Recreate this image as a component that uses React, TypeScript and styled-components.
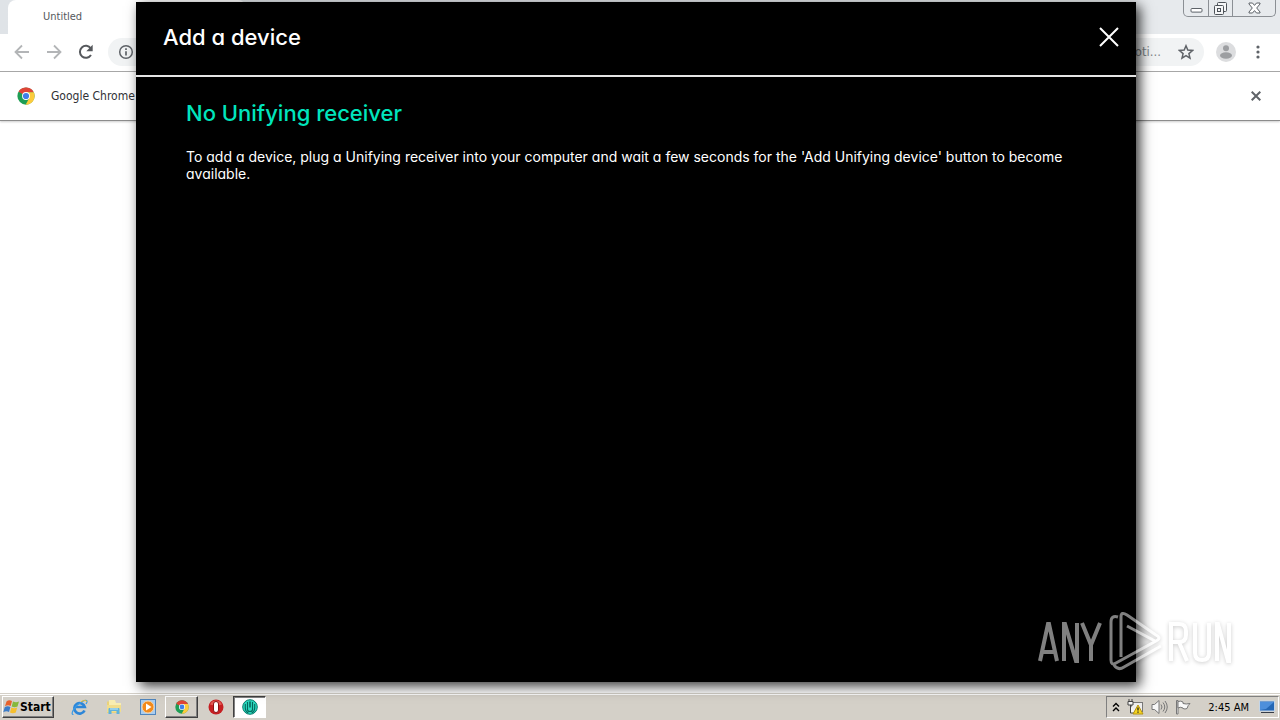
import React from 'react';
import styled, { createGlobalStyle } from 'styled-components';

const GlobalStyle = createGlobalStyle`
  * { box-sizing: border-box; }
  body { margin: 0; background: #fff; }
  button { font: inherit; color: inherit; background: none; border: 0; padding: 0; cursor: pointer; }
  svg { display: block; flex: none; }
`;

const uiFont = '"DejaVu Sans Condensed", "DejaVu Sans", sans-serif';

const Desktop = styled.div`
  position: relative;
  display: flex;
  flex-direction: column;
  min-height: 100vh;
  overflow: hidden;
  font-family: ${uiFont};
`;

const Browser = styled.section`
  flex: 1;
  display: flex;
  flex-direction: column;
  background: #fff;
`;

const TabStrip = styled.div`
  display: flex;
  justify-content: space-between;
  height: 34px;
  padding-left: 8px;
  background: linear-gradient(to right, #dfe3e7, #e7eaed 80%);
`;

const Tab = styled.div`
  width: 238px;
  padding: 10px 35px 0;
  border-radius: 8px 8px 0 0;
  background: #fff;
  color: #55585c;
  font-size: 11px;
  line-height: 14px;
`;

const WindowControls = styled.div`
  display: flex;
  height: 17px;
  margin-right: 4px;
  border: 1px solid #8b8f94;
  border-top: 0;
  border-radius: 0 0 5px 5px;
  overflow: hidden;
`;

const WindowButton = styled.button<{ $wide?: boolean }>`
  display: grid;
  place-items: center;
  width: ${(p) => (p.$wide ? 43 : 24)}px;
  & + & { border-left: 1px solid #8b8f94; }
`;

const Toolbar = styled.div`
  display: flex;
  align-items: center;
  gap: 12px;
  height: 38px;
  padding: 0 12px 2px;
  border-bottom: 1px solid #a9a9a9;
`;

const IconButton = styled.button`
  display: grid;
  place-items: center;
  width: 20px;
  height: 20px;
`;

const AddressBar = styled.div`
  flex: 1;
  display: flex;
  align-items: center;
  gap: 15px;
  height: 28px;
  padding: 0 8px 0 10px;
  border-radius: 14px;
  background: #f1f3f4;
  color: #80868b;
  font-size: 13px;
`;

const AddressText = styled.span`
  flex: 1;
  text-align: right;
`;

const InfoBar = styled.div`
  display: flex;
  align-items: center;
  gap: 16px;
  height: 49px;
  padding: 0 14px 0 17px;
  border-bottom: 1px solid #8c8c8c;
  box-shadow: 0 1px 2px rgba(0, 0, 0, 0.2);
  color: #303236;
  font-size: 12px;
`;

const InfoText = styled.span`
  flex: 1;
`;

const Dialog = styled.section`
  position: absolute;
  top: 2px;
  right: 144px;
  bottom: 38px;
  left: 136px;
  background: #000;
  color: #fff;
  box-shadow: 4px 4px 12px rgba(0, 0, 0, 0.8);
  font-family: Inter, sans-serif;
  font-feature-settings: "cv11" 1;
`;

const DialogHeader = styled.header`
  display: flex;
  align-items: center;
  justify-content: space-between;
  height: 75px;
  padding: 0 17px 4px 27px;
  border-bottom: 2px solid #e4e4e4;
`;

const DialogTitle = styled.h1`
  margin: 0;
  font-size: 22px;
  line-height: 28px;
  font-weight: 500;
`;

const DialogBody = styled.div`
  padding: 22px 50px;
`;

const Heading = styled.h2`
  margin: 0 0 21px;
  color: #00e5bd;
  font-size: 22px;
  line-height: 28px;
  font-weight: 500;
`;

const Message = styled.p`
  margin: 0;
  font-size: 14px;
  line-height: 17px;
  font-weight: 400;
`;

const Watermark = styled.div`
  position: absolute;
  right: 48px;
  bottom: 47px;
  opacity: 0.5;
  filter: drop-shadow(0 1px 2px rgba(0, 0, 0, 0.4));
`;

const Taskbar = styled.footer`
  display: flex;
  align-items: center;
  justify-content: space-between;
  height: 27px;
  padding: 1px 1px 1px 2px;
  background: #d4d0c8;
  border-top: 1px solid #d4d0c8;
  box-shadow: inset 0 1px 0 #fff;
`;

const TaskGroup = styled.div`
  display: flex;
  align-items: center;
  gap: 1px;
`;

const StartButton = styled.button`
  display: flex;
  align-items: center;
  width: 52px;
  height: 22px;
  margin-right: 8px;
  border: 1px solid;
  border-color: #fff #404040 #404040 #fff;
  box-shadow: inset -1px -1px 0 #808080;
  color: #000;
  font-size: 12px;
  font-weight: 700;
`;

const TaskButton = styled.button<{ $state?: 'open' | 'active' }>`
  display: grid;
  place-items: center;
  width: 33px;
  height: 22px;
  border: 1px solid transparent;
  ${(p) => p.$state === 'open' && `
    border-color: #fff #404040 #404040 #fff;
    box-shadow: inset -1px -1px 0 #808080;
  `}
  ${(p) => p.$state === 'active' && `
    border-color: #404040 #fff #fff #404040;
    box-shadow: inset 1px 1px 0 #808080;
    background: #fff;
  `}
`;

const Tray = styled.div`
  display: flex;
  align-items: center;
  gap: 7px;
  height: 22px;
  padding: 0 3px 0 5px;
  border: 1px solid;
  border-color: #808080 #fff #fff #808080;
  color: #000;
  font-size: 11px;
`;

const Clock = styled.time`
  margin: 0 3px 0 9px;
`;

const ChromeLogo = ({ size = 18 }: { size?: number }) => (
  <svg width={size} height={size} viewBox="0 0 48 48">
    <circle cx="24" cy="24" r="23" fill="#1e9e54" />
    <path d="M24 24 4.1 12.5A23 23 0 0 1 43.9 12.5L44 14H24Z" fill="#df4436" />
    <path d="M24 14H44.8A23 23 0 0 1 23 47L32.7 29Z" fill="#fccb3c" />
    <circle cx="24" cy="24" r="10.5" fill="#fff" />
    <circle cx="24" cy="24" r="8.2" fill="#3f7fe8" />
  </svg>
);

const BackArrow = ({ flip = false }: { flip?: boolean }) => (
  <svg width="16" height="16" viewBox="0 0 16 16" fill="none" stroke="#b3b5b7" strokeWidth="1.8">
    <path d={flip ? 'M1 8h13M8 1.5 14.5 8 8 14.5' : 'M15 8H2M8 1.5 1.5 8 8 14.5'} />
  </svg>
);

export default function App() {
  return (
    <Desktop>
      <GlobalStyle />
      <Browser>
        <TabStrip>
          <Tab>Untitled</Tab>
          <WindowControls>
            <WindowButton aria-label="Minimize">
              <svg width="13" height="17" viewBox="0 0 13 17" fill="#fff" stroke="#5d6268">
                <rect x="1" y="8.5" width="11" height="3.6" rx="1" />
              </svg>
            </WindowButton>
            <WindowButton aria-label="Restore">
              <svg width="13" height="13" viewBox="0 0 13 13" fill="#f5f6f7" stroke="#4d5258">
                <rect x="3.5" y=".5" width="9" height="9" rx="1" />
                <rect x=".5" y="3.5" width="9" height="9" rx="1" />
                <rect x="3.5" y="6.5" width="3" height="3" />
              </svg>
            </WindowButton>
            <WindowButton aria-label="Close window" $wide>
              <svg width="13" height="12" viewBox="0 0 13 12" fill="#fff" stroke="#5d6268">
                <path d="M1 1h3.5l2 2.4L8.5 1H12v1L8.7 6l3.3 4v1H8.5l-2-2.4L4.5 11H1v-1l3.3-4L1 2Z" />
              </svg>
            </WindowButton>
          </WindowControls>
        </TabStrip>
        <Toolbar>
          <IconButton aria-label="Back"><BackArrow /></IconButton>
          <IconButton aria-label="Forward"><BackArrow flip /></IconButton>
          <IconButton aria-label="Reload">
            <svg width="16" height="16" viewBox="0 0 16 16">
              <path d="M13 11A6 6 0 1 1 12.8 4.3" fill="none" stroke="#55585c" strokeWidth="2" />
              <path d="M14.7.8v6.400H8.300Z" fill="#55585c" />
            </svg>
          </IconButton>
          <AddressBar>
            <svg width="16" height="16" viewBox="0 0 16 16" fill="none" stroke="#5f6368" strokeWidth="1.5">
              <circle cx="8" cy="8" r="6.3" />
              <path d="M8 7.2v4.300M8 4.300v1.700" strokeWidth="1.7" />
            </svg>
            <AddressText>oti...</AddressText>
            <IconButton aria-label="Bookmark this page">
              <svg width="16" height="16" viewBox="0 0 16 16" fill="none" stroke="#5f6368" strokeWidth="1.5">
                <path d="m8 1.8 1.800 4.300 4.700.4-3.600 3.100 1.100 4.600L8 11.700l-4 2.500 1.100-4.600L1.500 6.500l4.700-.4Z" />
              </svg>
            </IconButton>
          </AddressBar>
          <IconButton aria-label="Profile">
            <svg width="20" height="20" viewBox="0 0 20 20">
              <circle cx="10" cy="10" r="10" fill="#dcdddf" />
              <circle cx="10" cy="6.3" r="3" fill="#9c9ea1" />
              <ellipse cx="10" cy="13.5" rx="6" ry="3.3" fill="#9c9ea1" />
            </svg>
          </IconButton>
          <IconButton aria-label="Menu">
            <svg width="4" height="14" viewBox="0 0 4 14" fill="#5f6368">
              <circle cx="2" cy="2" r="1.6" /><circle cx="2" cy="7" r="1.6" /><circle cx="2" cy="12" r="1.6" />
            </svg>
          </IconButton>
        </Toolbar>
        <InfoBar>
          <ChromeLogo />
          <InfoText>Google Chrome</InfoText>
          <IconButton aria-label="Dismiss">
            <svg width="10" height="10" viewBox="0 0 10 10" stroke="#5f6368" strokeWidth="2">
              <path d="m.7.7 8.6 8.6M9.3.7.7 9.3" />
            </svg>
          </IconButton>
        </InfoBar>
      </Browser>

      <Taskbar>
        <TaskGroup>
          <StartButton>
            <svg width="17" height="16" viewBox="0 0 17 16">
              <path d="M3.5 2.5Q6 .5 9 2L7.7 7Q5 5.5 2 7.2Z" fill="#e8622c" />
              <path d="M10 2.5q3 1.5 6 0L14.5 7.5q-3 1.5-5.8 0Z" fill="#86b83b" />
              <path d="M1.7 8.2Q4.5 6.5 7.4 8L6 13Q3.5 11.5.3 13.2Z" fill="#3c7cc8" />
              <path d="M8.4 8.5q3 1.5 5.8 0L12.8 13.5q-3 1.5-5.8 0Z" fill="#f6bf2e" />
            </svg>
            Start
          </StartButton>
          <TaskButton aria-label="Internet Explorer">
            <svg width="17" height="17" viewBox="0 0 17 17" fill="none">
              <path d="M13.5 11.5A5.3 5.3 0 1 1 13.8 8H4.5" stroke="#2c86d8" strokeWidth="2.7" />
              <path d="M2.5 15.5C-1.5 15.5 4 6.5 10.5 3 16-.5 17 2 15 5" stroke="#3a9ae6" strokeWidth="1.2" />
              <path d="M10 2.7Q15.5-.3 15.5 3" stroke="#e7bd35" />
            </svg>
          </TaskButton>
          <TaskButton aria-label="Windows Explorer">
            <svg width="16" height="16" viewBox="0 0 16 16">
              <path d="M1 2.5h5l1.5 1.5H14v10H1Z" fill="#ead27a" />
              <path d="M3 1h6l1 3h5v4H3Z" fill="#f8edb0" />
              <path d="M1 6h14v7H1Z" fill="#f1dd8c" />
              <path d="M2.5 15V10q0-1 1-1h9q1 0 1 1v5h-3v-3h-5v3Z" fill="#5fb2dc" />
              <path d="M4 10h8" stroke="#c8ecf8" />
            </svg>
          </TaskButton>
          <TaskButton aria-label="Media Player">
            <svg width="16" height="16" viewBox="0 0 16 16">
              <rect x=".5" y=".5" width="15" height="15" fill="#a9cdf0" stroke="#4f85bd" />
              <circle cx="8" cy="8" r="6" fill="#f28a1c" stroke="#fad2a1" />
              <path d="m6 4.5 5.5 3.5L6 11.5Z" fill="#fff" />
            </svg>
          </TaskButton>
          <TaskButton aria-label="Google Chrome" $state="open"><ChromeLogo size={14} /></TaskButton>
          <TaskButton aria-label="Opera">
            <svg width="16" height="16" viewBox="0 0 16 16">
              <circle cx="8" cy="8" r="7.5" fill="#c61f22" />
              <path d="M2 5.5a6.5 6.5 0 0 1 12 0Q8 7.5 2 5.5Z" fill="#e55a55" />
              <rect x="5.5" y="2.5" width="5" height="11" rx="2.5" fill="#fff" stroke="#8e1014" />
            </svg>
          </TaskButton>
          <TaskButton aria-label="Logitech Unifying" $state="active">
            <svg width="16" height="16" viewBox="0 0 16 16" fill="none">
              <circle cx="8" cy="8" r="7.3" fill="#2ad8be" stroke="#087c6c" />
              <path d="M8 2.5v6" stroke="#04584d" strokeWidth="1.4" />
              <path d="M5.5 3v7.5q0 2 2.5 2t2.500-2V3M3.300 5v4q0 3.500 3 5M12.700 5v4q0 3.500-3 5" stroke="#04695c" strokeWidth="1.1" />
            </svg>
          </TaskButton>
        </TaskGroup>
        <Tray>
          <svg width="8" height="10" viewBox="0 0 8 10" fill="none" stroke="#000" strokeWidth="1.4">
            <path d="m1 4.5 3-3 3 3M1 9l3-3 3 3" />
          </svg>
          <svg width="17" height="16" viewBox="0 0 17 16">
            <rect x="4.5" y="3.5" width="11" height="9" fill="#eee" stroke="#777" />
            <path d="M1 2.5h5V6H1ZM2 0v2.500M5 0v2.500M3.500 6v8H8" fill="#f6f6f6" stroke="#444" />
            <path d="m11 6 5 9H6Z" fill="#f6d51f" stroke="#b69312" />
            <path d="M11 8.5v3M11 12.5v1.300" stroke="#222" strokeWidth="1.3" />
          </svg>
          <svg width="17" height="16" viewBox="0 0 17 16" fill="none" stroke="#777">
            <path d="M1 5.5h2.500L8 1.500v13l-4.500-4H1Z" fill="#f7f7f7" />
            <path d="M10 5.5q2 2.500 0 5M12 3.500q3.500 4.500 0 9M14 2q4.500 6 0 12" />
          </svg>
          <svg width="17" height="16" viewBox="0 0 17 16" fill="#f8f8f8" stroke="#777">
            <path d="M1.5 1.5h1.500V15H1.500Z" />
            <path d="M3 2.5q3-1 5 .5v1.500q3 1 7 0-2 1.500-3 5-2 1-4 0V9q-3-1.500-5 0Z" />
          </svg>
          <Clock>2:45 AM</Clock>
          <svg width="16" height="14" viewBox="0 0 16 14">
            <rect x=".5" y="1" width="15" height="10" fill="#2467b5" stroke="#c3d5e8" />
            <path d="M1 2h14L7 9 1 10Z" fill="#4d8fdb" />
            <path d="M2 12.5h13" stroke="#353b46" />
          </svg>
        </Tray>
      </Taskbar>

      <Dialog role="dialog" aria-labelledby="dialog-title">
        <DialogHeader>
          <DialogTitle id="dialog-title">Add a device</DialogTitle>
          <IconButton aria-label="Close">
            <svg width="20" height="20" viewBox="0 0 20 20" stroke="#fff" strokeWidth="2">
              <path d="m1 1 18 18M19 1 1 19" />
            </svg>
          </IconButton>
        </DialogHeader>
        <DialogBody>
          <Heading>No Unifying receiver</Heading>
          <Message>
            To add a device, plug a Unifying receiver into your computer and wait a few seconds for the 'Add Unifying device' button to become available.
          </Message>
        </DialogBody>
      </Dialog>

      <Watermark>
        <svg width="194" height="64" viewBox="0 0 194 64" fill="none" stroke="#fff" strokeWidth="4" role="img" aria-label="Any Run">
          <path d="M2 52 10 15h1L19 52M5 43h12M26 52V15h1L38 52h1V14M44 14l9 22v16M53 36l9-22" />
          <path d="M80 8q-7-2-7 5v38q0 6 5 3l40-22q6-3 0-6L89 6q-6-4-6 2v40M89 17l28 15M76 56q4 6 10 2l37-21" strokeWidth="3" />
          <path d="M133 52V15h8q7 0 7 7v4q0 7-7 7h-8M141 33l8 19M157 14v30q0 7 7 7t7-7V14M179 52V15h1l10 37h1V14" />
        </svg>
      </Watermark>
    </Desktop>
  );
}
